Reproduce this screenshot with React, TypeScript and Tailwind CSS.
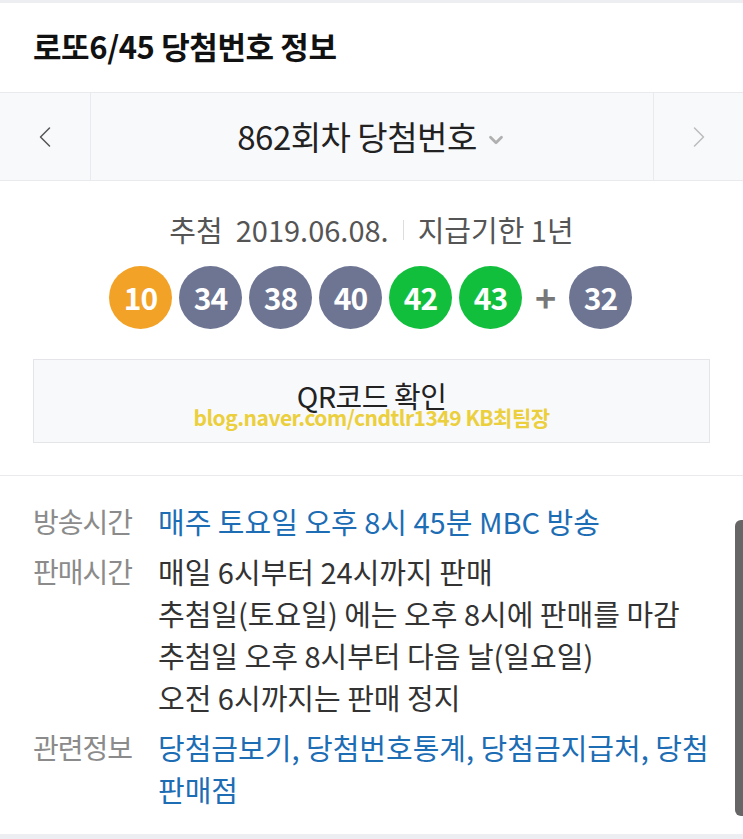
import { ChevronLeft, ChevronRight, ChevronDown } from 'lucide-react'

const FONT = '"Noto Sans CJK KR", "Noto Sans", sans-serif'

interface Ball {
  n: number
  color: string
}

const balls: Ball[] = [
  { n: 10, color: 'bg-[#f2a226]' },
  { n: 34, color: 'bg-[#6d7593]' },
  { n: 38, color: 'bg-[#6d7593]' },
  { n: 40, color: 'bg-[#6d7593]' },
  { n: 42, color: 'bg-[#12bf3d]' },
  { n: 43, color: 'bg-[#12bf3d]' },
]

function LottoBall({ ball }: { ball: Ball }) {
  return (
    <div
      className={`w-[63px] h-[63px] rounded-full flex items-center justify-center text-white text-[30px] font-bold tracking-[-1px] ${ball.color}`}
    >
      {ball.n}
    </div>
  )
}

export default function App() {
  const rows = [
    { label: '방송시간', lines: ['매주 토요일 오후 8시 45분 MBC 방송'], link: true },
    {
      label: '판매시간',
      lines: [
        '매일 6시부터 24시까지 판매',
        '추첨일(토요일) 에는 오후 8시에 판매를 마감',
        '추첨일 오후 8시부터 다음 날(일요일)',
        '오전 6시까지는 판매 정지',
      ],
      link: false,
    },
    { label: '관련정보', lines: ['당첨금보기, 당첨번호통계, 당첨금지급처, 당첨', '판매점'], link: true },
  ]

  return (
    <div className="w-[743px] h-[839px] bg-white overflow-hidden relative" style={{ fontFamily: FONT }}>
      <div className="h-[3px] bg-[#eceef1]" />

      {/* Title */}
      <div className="h-[89px] flex items-center pl-[33px]">
        <h1 className="text-[31px] font-bold text-[#111] tracking-[-0.4px] pb-[2px]">로또6/45 당첨번호 정보</h1>
      </div>

      {/* Round selector */}
      <div className="h-[89px] flex bg-[#f8f9fb] border-y border-[#e8eaee]">
        <div className="w-[91px] flex items-center justify-center border-r border-[#e8eaee]">
          <ChevronLeft className="w-[36px] h-[36px] text-[#555]" strokeWidth={1} />
        </div>
        <div className="flex-1 flex items-center justify-center gap-[8px]">
          <span className="text-[33px] text-[#222] tracking-[-0.5px]">862회차 당첨번호</span>
          <ChevronDown className="w-[22px] h-[22px] text-[#b0b0b0] mt-[6px]" strokeWidth={3} />
        </div>
        <div className="w-[90px] flex items-center justify-center border-l border-[#e8eaee]">
          <ChevronRight className="w-[36px] h-[36px] text-[#bbb]" strokeWidth={1} />
        </div>
      </div>

      {/* Draw result */}
      <div className="flex flex-col items-center pt-[34px]">
        <div className="flex items-center text-[29px] text-[#555] leading-none">
          <span>추첨 &nbsp;2019.06.08.</span>
          <span className="w-px h-[20px] bg-[#ddd] mx-[14px]" />
          <span>지급기한 1년</span>
        </div>
        <div className="flex items-center gap-[7px] mt-[22px] mr-[2px]">
          {balls.map((b) => (
            <LottoBall key={b.n} ball={b} />
          ))}
          <span className="text-[#777] text-[36px] font-bold w-[33px] text-center leading-none pb-[3px]">+</span>
          <LottoBall ball={{ n: 32, color: 'bg-[#6d7593]' }} />
        </div>
      </div>

      <div className="px-[33px] pt-[30px] pb-[32px] border-b border-[#e8eaee]">
        <div className="h-[84px] bg-[#f8f9fb] border border-[#e3e5e9] flex flex-col items-center justify-center relative">
          <span className="text-[29px] text-[#222] tracking-[-0.5px] mb-[10px]">QR코드 확인</span>
          <span className="absolute top-[42px] text-[21px] font-bold text-[#ebcf3c] tracking-[-0.5px]">
            blog.naver.com/cndtlr1349 KB최팀장
          </span>
        </div>
      </div>

      {/* Info */}
      <div className="pt-[24px] px-[33px] text-[29px] leading-[42px]">
        {rows.map((r) => (
          <div key={r.label} className="flex mb-[8px]">
            <div className="w-[125px] shrink-0 text-[#8b8b8b] text-[28px] tracking-[-1px]">{r.label}</div>
            <div className={r.link ? 'text-[#1d6db5]' : 'text-[#333]'}>
              {r.lines.map((l) => (
                <div key={l} className="whitespace-nowrap">{l}</div>
              ))}
            </div>
          </div>
        ))}
      </div>

      <div className="absolute right-0 top-[520px] w-[8px] h-[296px] bg-[#666] rounded-l-[6px]" />
      <div className="absolute left-0 right-0 top-[834px] h-[5px] bg-[#eceef1]" />
    </div>
  )
}
